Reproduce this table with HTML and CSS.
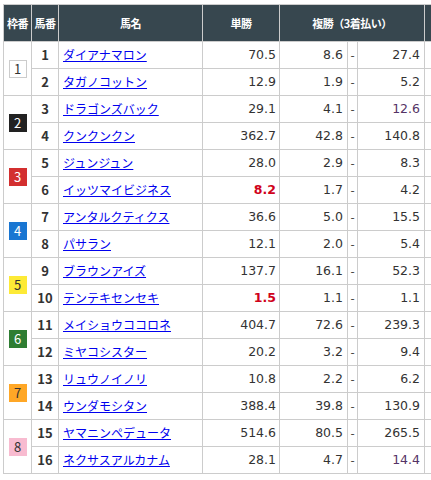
FILE: index.html
```html
<!DOCTYPE html>
<html lang="ja">
<head>
    <meta charset="UTF-8">
    <meta name="viewport" content="width=device-width, initial-scale=1.0">
    <title>オッズ</title>
    <link rel="stylesheet" href="styles.css">
</head>
<body>
    <div class="wrap">
        <table class="odds">
            <colgroup>
                <col class="c-waku">
                <col class="c-uma">
                <col class="c-name">
                <col class="c-win">
                <col class="c-pmin">
                <col class="c-dash">
                <col class="c-pmax">
                <col class="c-extra">
            </colgroup>
            <thead>
                <tr>
                    <th>枠番</th>
                    <th>馬番</th>
                    <th>馬名</th>
                    <th>単勝</th>
                    <th colspan="3">複勝（3着払い）</th>
                    <th></th>
                </tr>
            </thead>
            <tbody>
                <tr>
                    <td class="waku" rowspan="2"><span class="badge w1">1</span></td>
                    <td class="uma">1</td>
                    <td class="name"><a href="#">ダイアナマロン</a></td>
                    <td class="num">70.5</td>
                    <td class="num pmin">8.6</td><td class="dash">-</td><td class="num pmax">27.4</td>
                    <td></td>
                </tr>
                <tr>
                    <td class="uma">2</td>
                    <td class="name"><a href="#">タガノコットン</a></td>
                    <td class="num">12.9</td>
                    <td class="num pmin">1.9</td><td class="dash">-</td><td class="num pmax">5.2</td>
                    <td></td>
                </tr>
                <tr>
                    <td class="waku" rowspan="2"><span class="badge w2">2</span></td>
                    <td class="uma">3</td>
                    <td class="name"><a href="#">ドラゴンズバック</a></td>
                    <td class="num">29.1</td>
                    <td class="num pmin">4.1</td><td class="dash">-</td><td class="num pmax low">12.6</td>
                    <td></td>
                </tr>
                <tr>
                    <td class="uma">4</td>
                    <td class="name"><a href="#">クンクンクン</a></td>
                    <td class="num">362.7</td>
                    <td class="num pmin">42.8</td><td class="dash">-</td><td class="num pmax">140.8</td>
                    <td></td>
                </tr>
                <tr>
                    <td class="waku" rowspan="2"><span class="badge w3">3</span></td>
                    <td class="uma">5</td>
                    <td class="name"><a href="#">ジュンジュン</a></td>
                    <td class="num">28.0</td>
                    <td class="num pmin">2.9</td><td class="dash">-</td><td class="num pmax">8.3</td>
                    <td></td>
                </tr>
                <tr>
                    <td class="uma">6</td>
                    <td class="name"><a href="#">イッツマイビジネス</a></td>
                    <td class="num hot">8.2</td>
                    <td class="num pmin">1.7</td><td class="dash">-</td><td class="num pmax">4.2</td>
                    <td></td>
                </tr>
                <tr>
                    <td class="waku" rowspan="2"><span class="badge w4">4</span></td>
                    <td class="uma">7</td>
                    <td class="name"><a href="#">アンタルクティクス</a></td>
                    <td class="num">36.6</td>
                    <td class="num pmin">5.0</td><td class="dash">-</td><td class="num pmax">15.5</td>
                    <td></td>
                </tr>
                <tr>
                    <td class="uma">8</td>
                    <td class="name"><a href="#">パサラン</a></td>
                    <td class="num">12.1</td>
                    <td class="num pmin">2.0</td><td class="dash">-</td><td class="num pmax">5.4</td>
                    <td></td>
                </tr>
                <tr>
                    <td class="waku" rowspan="2"><span class="badge w5">5</span></td>
                    <td class="uma">9</td>
                    <td class="name"><a href="#">ブラウンアイズ</a></td>
                    <td class="num">137.7</td>
                    <td class="num pmin">16.1</td><td class="dash">-</td><td class="num pmax">52.3</td>
                    <td></td>
                </tr>
                <tr>
                    <td class="uma">10</td>
                    <td class="name"><a href="#">テンテキセンセキ</a></td>
                    <td class="num hot">1.5</td>
                    <td class="num pmin">1.1</td><td class="dash">-</td><td class="num pmax">1.1</td>
                    <td></td>
                </tr>
                <tr>
                    <td class="waku" rowspan="2"><span class="badge w6">6</span></td>
                    <td class="uma">11</td>
                    <td class="name"><a href="#">メイショウココロネ</a></td>
                    <td class="num">404.7</td>
                    <td class="num pmin">72.6</td><td class="dash">-</td><td class="num pmax">239.3</td>
                    <td></td>
                </tr>
                <tr>
                    <td class="uma">12</td>
                    <td class="name"><a href="#">ミヤコシスター</a></td>
                    <td class="num">20.2</td>
                    <td class="num pmin">3.2</td><td class="dash">-</td><td class="num pmax">9.4</td>
                    <td></td>
                </tr>
                <tr>
                    <td class="waku" rowspan="2"><span class="badge w7">7</span></td>
                    <td class="uma">13</td>
                    <td class="name"><a href="#">リュウノイノリ</a></td>
                    <td class="num">10.8</td>
                    <td class="num pmin">2.2</td><td class="dash">-</td><td class="num pmax">6.2</td>
                    <td></td>
                </tr>
                <tr>
                    <td class="uma">14</td>
                    <td class="name"><a href="#">ウンダモシタン</a></td>
                    <td class="num">388.4</td>
                    <td class="num pmin">39.8</td><td class="dash">-</td><td class="num pmax">130.9</td>
                    <td></td>
                </tr>
                <tr>
                    <td class="waku" rowspan="2"><span class="badge w8">8</span></td>
                    <td class="uma">15</td>
                    <td class="name"><a href="#">ヤマニンペデュータ</a></td>
                    <td class="num">514.6</td>
                    <td class="num pmin">80.5</td><td class="dash">-</td><td class="num pmax">265.5</td>
                    <td></td>
                </tr>
                <tr>
                    <td class="uma">16</td>
                    <td class="name"><a href="#">ネクサスアルカナム</a></td>
                    <td class="num">28.1</td>
                    <td class="num pmin">4.7</td><td class="dash">-</td><td class="num pmax low">14.4</td>
                    <td></td>
                </tr>
            </tbody>
        </table>
    </div>
</body>
</html>
```

FILE: styles.css
```css
html, body {
    margin: 0;
    padding: 0;
    overflow: hidden;
    background-color: #fff;
}

body {
    font-family: "Noto Sans CJK JP", sans-serif;
    color: #333;
}

/* the table scrolls sideways on the real page; here it is clipped */
.wrap {
    width: 428px;
    padding: 4px 0 0 3px;
    overflow: hidden;
}

.odds {
    border-collapse: collapse;
    table-layout: fixed;
    width: 482px;
}

.c-waku { width: 28px; }
.c-uma { width: 27px; }
.c-name { width: 144px; }
.c-win { width: 77px; }
.c-pmin { width: 68px; }
.c-dash { width: 10px; }
.c-pmax { width: 67px; }
.c-extra { width: 61px; }

.odds th,
.odds td {
    border: 1px solid #ccc;
    padding: 0;
    white-space: nowrap;
    overflow: hidden;
}

.odds th {
    height: 36px;
    background-color: #37474f;
    color: #fff;
    font-size: 11px;
    font-weight: bold;
    text-align: center;
    letter-spacing: -0.5px;
}

.odds td {
    height: 24px;
    padding-bottom: 2px;
    font-size: 13px;
}

.waku {
    text-align: center;
}

.badge {
    display: inline-block;
    width: 18px;
    height: 18px;
    line-height: 18px;
    font-size: 13px;
    text-align: center;
    vertical-align: middle;
    box-sizing: border-box;
}

.w1 { background-color: #fff; border: 1px solid #ccc; line-height: 16px; color: #333; }
.w2 { background-color: #222; color: #fff; }
.w3 { background-color: #d32f2f; color: #fff; }
.w4 { background-color: #1976d2; color: #fff; }
.w5 { background-color: #fdea36; color: #333; }
.w6 { background-color: #2e7d32; color: #fff; }
.w7 { background-color: #ffa726; color: #333; }
.w8 { background-color: #f8bbd0; color: #333; }

.uma {
    text-align: center;
    font-weight: bold;
}

.name {
    padding-left: 4px !important;
    font-size: 12px !important;
}

.name a {
    color: #00e;
}

.num {
    text-align: right;
    padding-right: 3px !important;
    font-family: "DejaVu Sans", "Noto Sans CJK JP", sans-serif;
    font-size: 12.5px !important;
}

.pmin,
.pmax {
    padding-right: 4px !important;
}

.pmin { border-right: 1px dashed #ccc !important; }
.pmax { border-left: 1px dashed #ccc !important; }

.dash {
    text-align: center;
    font-size: 12px !important;
}

.hot {
    color: #d0021b;
    font-weight: bold;
}

.low {
    color: #553366;
}
```
